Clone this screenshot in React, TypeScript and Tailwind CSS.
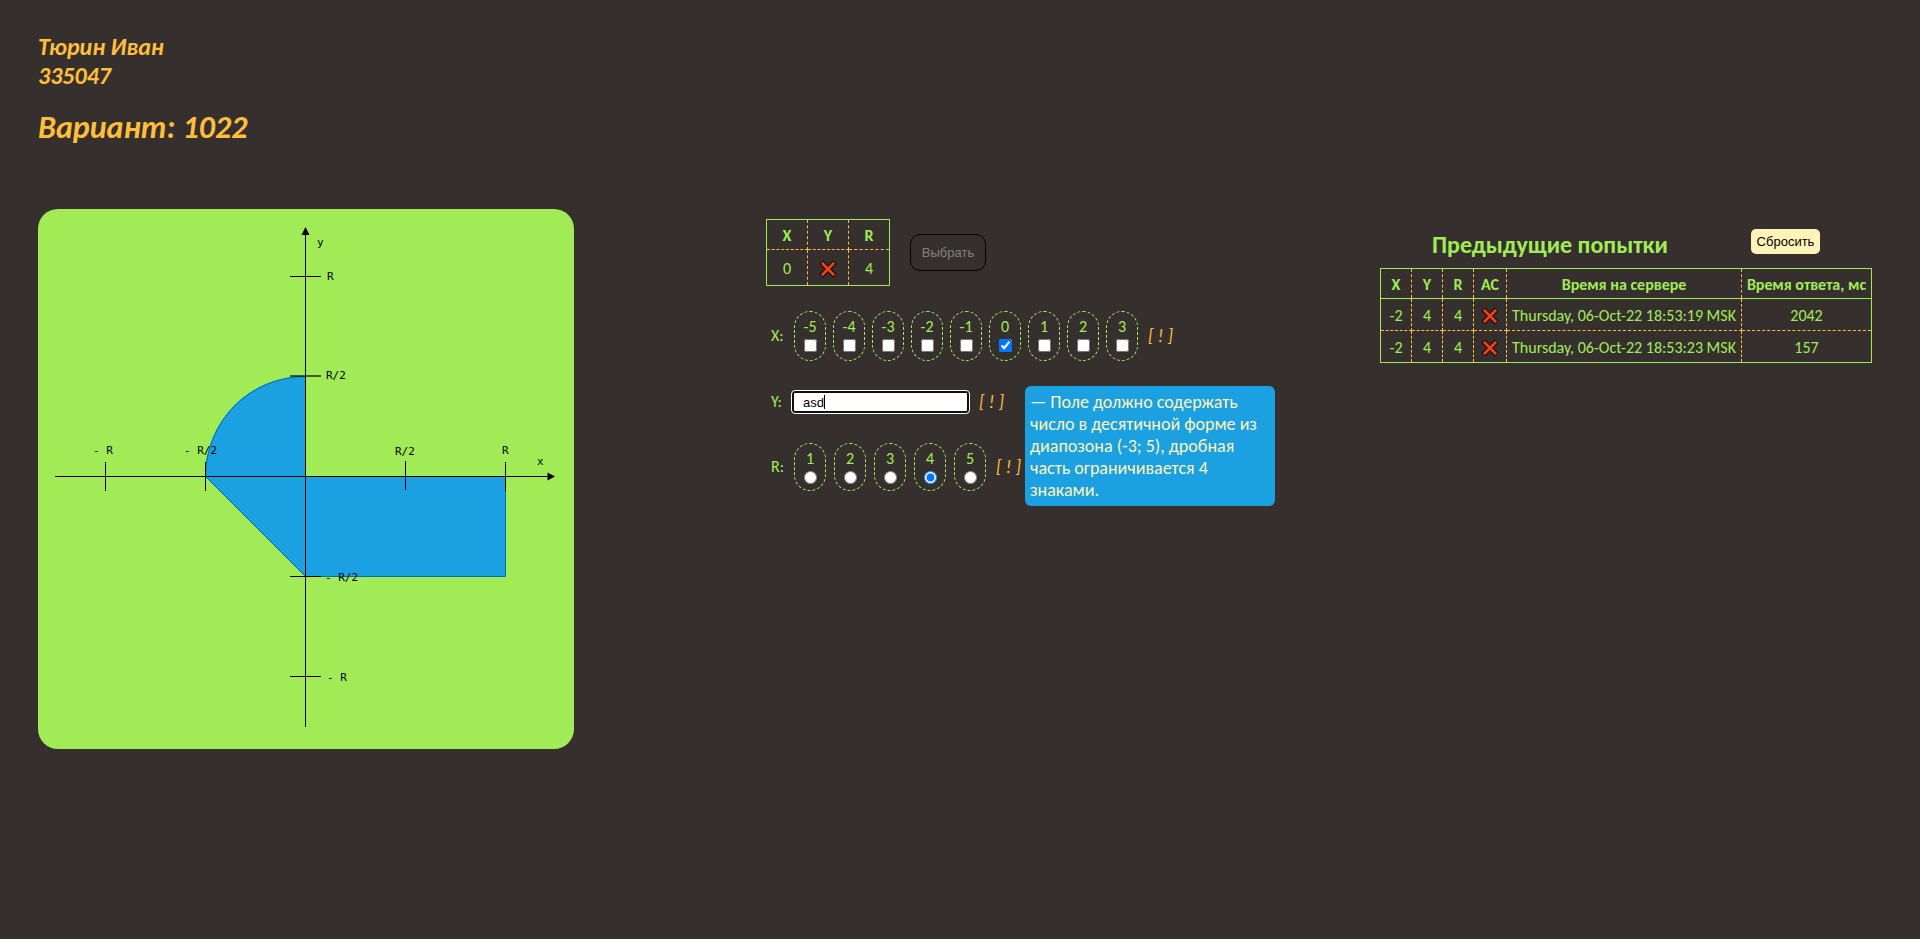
import React from 'react';

function Cross() {
  return (
    <svg viewBox="0 0 16 16" className="mx-auto block h-4 w-4 overflow-visible" role="img" aria-label="Нет">
      <path d="M3 3 13 13M13 3 3 13" stroke="#0c0c0c" strokeWidth="5" strokeLinecap="square" strokeLinejoin="round" fill="none" />
      <path d="M2.800 2.800 13.200 13.200M13.200 2.800 2.800 13.200" stroke="#f83c18" strokeWidth="2.800" strokeLinecap="square" fill="none" />
    </svg>
  );
}

function Graph() {
  return (
    <section className="w-[536px] shrink-0 rounded-[20px] bg-[#a1ec56] px-4 pb-[21px] pt-[15px]">
      <svg viewBox="0 0 504 504" className="block h-[504px] w-[504px] font-['DejaVu_Sans_Mono',monospace] text-[11px]">
        <path d="M151 252A100 100 0 0 1 251 152V252H451V352H251L151 252Z" fill="#1ba1e2" />
        <path d="M251.500 152.500A100 100 0 0 0 151.500 252.500L251.500 352.500H451.500V252.500" fill="none" stroke="#006eaf" />
        <g stroke="#000">
          <path d="M1 252.500H496M251.500 503V7" />
          <path d="M51.500 238V267M151.500 238V267M351.500 237V266M451.500 238V267" />
          <path d="M236 52.500H267M236 352.500H267M236 452.500H267" />
          <path d="M236 152H267" strokeWidth="2" opacity="0.6" />
        </g>
        <path d="M501 252.500 493.500 248.500V256.500ZM251.500 3 247.500 11H255.500Z" fill="#000" />
        <g fill="#000">
          <text x="263" y="22">y</text>
          <text x="273" y="56">R</text>
          <text x="272" y="155">R/2</text>
          <text x="271" y="357">- R/2</text>
          <text x="273" y="457">- R</text>
          <text x="39" y="230">- R</text>
          <text x="130" y="230">- R/2</text>
          <text x="341" y="231">R/2</text>
          <text x="448" y="230">R</text>
          <text x="483" y="241">x</text>
        </g>
      </svg>
    </section>
  );
}

function Hint() {
  return <span className="text-[18px] italic text-[#ffbe3b]">[ ! ]</span>;
}

const cell = 'border border-dashed border-[#ffbe3b] px-0 pb-0 pt-[2px] text-center';

export default function App() {
  return (
    <div className="min-h-screen bg-[#35302d] px-[38px] pt-8 font-['Carlito','Lato',sans-serif] text-base text-[#a1ec56]">
      <header className="h-[177px] font-bold italic text-[#ffbe3b]">
        <p className="text-2xl leading-[29px]">Тюрин Иван<br />335047</p>
        <h1 className="mt-[18px] text-[32px] leading-10">Вариант: 1022</h1>
      </header>
      <main className="flex items-start">
        <Graph />
        <form className="ml-48 w-[510px] shrink-0 pt-[10px]">
          <div className="flex items-center gap-5">
            <table className="w-[124px] table-fixed border-collapse border border-[#a1ec56]">
              <thead><tr className="h-[30px]"><th className={cell}>X</th><th className={cell}>Y</th><th className={cell}>R</th></tr></thead>
              <tbody><tr className="h-9"><td className={cell}>0</td><td className={cell}><Cross /></td><td className={cell}>4</td></tr></tbody>
            </table>
            <button type="button" disabled className="h-[37px] w-[76px] rounded-[10px] border border-black font-['Liberation_Sans',sans-serif] text-[13px] text-[#808080]">Выбрать</button>
          </div>
          <fieldset className="mt-[25px] flex h-[50px] items-center pl-[5px]">
            <span className="w-[23px]">X:</span>
            <div className="flex gap-[7px]">
              {[-5, -4, -3, -2, -1, 0, 1, 2, 3].map((v) => (
                <label key={v} className="flex h-[50px] w-8 flex-col items-center rounded-2xl border border-dashed border-[#a1ec56] pt-[5px] leading-5">
                  {v}
                  <input type="checkbox" name="x" value={v} defaultChecked={v === 0} className="mt-[2px] h-[13px] w-[13px]" />
                </label>
              ))}
            </div>
            <span className="ml-[10px]"><Hint /></span>
          </fieldset>
          <div className="relative mt-[25px] flex h-8 items-center pl-[5px]">
            <label htmlFor="y" className="w-[21px]">Y:</label>
            <div className="relative flex">
              <input id="y" defaultValue="asd" className="h-[22px] w-[177px] rounded-[3px] border-2 border-[#101010] bg-white px-[9px] font-['Liberation_Sans',sans-serif] text-[13px] text-black outline outline-1 outline-white" />
              <span className="absolute left-8 top-1 h-[14px] w-px bg-black" />
            </div>
            <span className="ml-[10px]"><Hint /></span>
            <p className="absolute left-[259px] top-0 w-[250px] rounded-md bg-[#1ba1e2] p-[5px] text-[18px] leading-[22px] text-[#fff3b8]">— Поле должно содержать число в десятичной форме из диапозона (-3; 5), дробная часть ограничивается 4 знаками.</p>
          </div>
          <fieldset className="mt-[25px] flex h-12 items-center pl-[5px]">
            <span className="w-[23px]">R:</span>
            <div className="flex gap-2">
              {[1, 2, 3, 4, 5].map((v) => (
                <label key={v} className="flex h-12 w-8 flex-col items-center rounded-2xl border border-dashed border-[#a1ec56] pt-[5px] leading-5">
                  {v}
                  <input type="radio" name="r" value={v} defaultChecked={v === 4} className="mt-[2px] h-[13px] w-[13px]" />
                </label>
              ))}
            </div>
            <span className="ml-[10px]"><Hint /></span>
          </fieldset>
        </form>
        <section className="ml-auto mr-[10px] w-[492px] pt-5">
          <div className="flex h-[39px] items-start">
            <h2 className="ml-[52px] w-[235px] whitespace-nowrap text-2xl font-bold leading-8">Предыдущие попытки</h2>
            <button type="button" className="ml-auto mr-[52px] h-[25px] w-[69px] rounded-[5px] bg-[#fff3b8] font-['Liberation_Sans',sans-serif] text-[13px] text-black">Сбросить</button>
          </div>
          <table className="w-full table-fixed border-collapse border border-[#a1ec56]">
            <colgroup><col className="w-[31px]" /><col className="w-[31px]" /><col className="w-[31px]" /><col className="w-[33px]" /><col className="w-[235px]" /><col /></colgroup>
            <thead className="border-b border-[#a1ec56]">
              <tr className="h-[30px]">{['X', 'Y', 'R', 'AC', 'Время на сервере', 'Время ответа, мс'].map((h) => <th key={h} className="whitespace-nowrap border-x border-dashed border-x-[#ffbe3b] px-0 pb-0 pt-[2px]">{h}</th>)}</tr>
            </thead>
            <tbody>
              {[['Thursday, 06-Oct-22 18:53:19 MSK', '2042'], ['Thursday, 06-Oct-22 18:53:23 MSK', '157']].map(([t, ms]) => (
                <tr key={ms} className="h-8">
                  <td className={cell}>-2</td><td className={cell}>4</td><td className={cell}>4</td><td className={cell}><Cross /></td>
                  <td className={cell + ' whitespace-nowrap'}>{t}</td><td className={cell}>{ms}</td>
                </tr>
              ))}
            </tbody>
          </table>
        </section>
      </main>
    </div>
  );
}
